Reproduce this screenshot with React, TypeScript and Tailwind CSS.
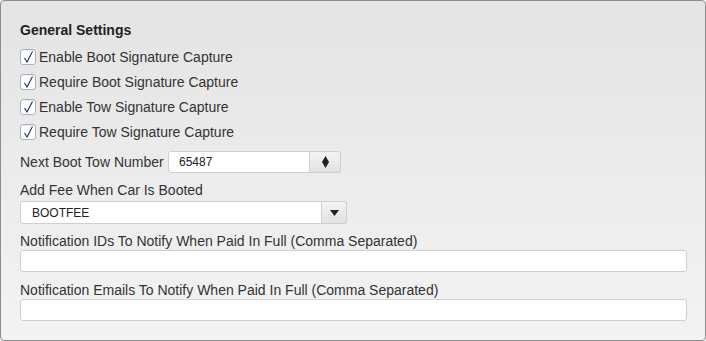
export default function App() {
  const checks = [
    'Enable Boot Signature Capture',
    'Require Boot Signature Capture',
    'Enable Tow Signature Capture',
    'Require Tow Signature Capture',
  ]

  return (
    <div className="w-[706px] h-[341px] bg-white font-['Liberation_Sans',Arial,sans-serif] text-[14px] leading-[16px] text-[#333]">
      <div className="h-full rounded-[4px] border border-[#8c8c8c] bg-gradient-to-b from-[#e4e4e4] to-[#f3f3f3] pl-[19px] pr-[18px] pt-[21px]">
        <div className="font-bold text-[#222] mb-[6px]">General Settings</div>

        {checks.map((label) => (
          <div key={label} className="flex h-[25px] items-center gap-[3px]">
            <span className="flex h-[16px] w-[16px] items-center justify-center rounded-[3px] border border-[#a9b2c3] bg-white shadow-[inset_0_1px_1px_rgba(0,0,0,0.08)]">
              <svg width="11" height="12" viewBox="0 0 11 12">
                <path d="M1.5 7 L4 11 L9.5 0.5" fill="none" stroke="#1c2a66" strokeWidth="1.1" />
              </svg>
            </span>
            <span>{label}</span>
          </div>
        ))}

        <div className="mt-[7px] flex h-[22px] items-center">
          <span className="w-[148px]">Next Boot Tow Number</span>
          <div className="flex h-[22px]">
            <div className="flex w-[142px] items-center rounded-l-[3px] border border-[#cfcfcf] bg-white pl-[10px] text-[12px] text-[#222]">
              65487
            </div>
            <div className="flex w-[31px] items-center justify-center rounded-r-[3px] border border-l-0 border-[#cfcfcf] bg-gradient-to-b from-[#f4f4f4] to-[#e2e2e2]">
              <svg width="7" height="12" viewBox="0 0 7 12">
                <path d="M3.5 0 L7 6 L3.5 12 L0 6 Z" fill="#222" />
              </svg>
            </div>
          </div>
        </div>

        <div className="mt-[9px]">Add Fee When Car Is Booted</div>
        <div className="mt-[3px] flex h-[23px] w-[327px]">
          <div className="flex flex-1 items-center rounded-l-[3px] border border-[#cfcfcf] bg-white pl-[11px] text-[12px] text-[#222]">
            BOOTFEE
          </div>
          <div className="flex w-[25px] items-center justify-center rounded-r-[3px] border border-l-0 border-[#cfcfcf] bg-gradient-to-b from-[#f4f4f4] to-[#e2e2e2]">
            <svg width="9" height="6" viewBox="0 0 9 6">
              <path d="M0 0 L9 0 L4.5 6 Z" fill="#222" />
            </svg>
          </div>
        </div>

        <div className="mt-[9px]">Notification IDs To Notify When Paid In Full (Comma Separated)</div>
        <div className="mt-[1px] h-[22px] rounded-[3px] border border-[#cfcfcf] bg-white" />

        <div className="mt-[10px]">Notification Emails To Notify When Paid In Full (Comma Separated)</div>
        <div className="mt-[1px] h-[22px] rounded-[3px] border border-[#cfcfcf] bg-white" />
      </div>
    </div>
  )
}
